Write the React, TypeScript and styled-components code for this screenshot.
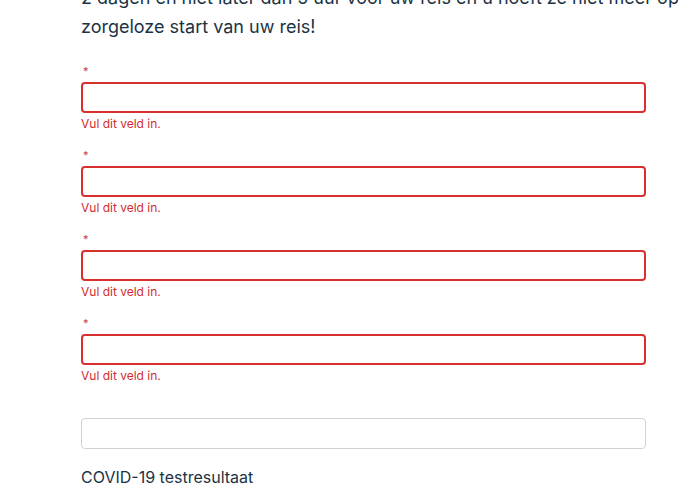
import styled, { createGlobalStyle } from 'styled-components';

const fields = [1, 2, 3, 4];

function App() {
  return (
    <>
      <GlobalStyle />
      <Page>
        <Intro>
          2 dagen en niet later dan 5 uur voor uw reis en u hoeft ze niet meer op
          zorgeloze start van uw reis!
        </Intro>
        <Form>
          {fields.map((id) => (
            <Field key={id}>
              <Required>*</Required>
              <Input type="text" $invalid aria-invalid />
              <Error>Vul dit veld in.</Error>
            </Field>
          ))}
          <PlainField>
            <Input type="text" />
          </PlainField>
          <SectionTitle>COVID-19 testresultaat</SectionTitle>
        </Form>
      </Page>
    </>
  );
}

export default App;

const GlobalStyle = createGlobalStyle`
  body {
    margin: 0;
    background: #ffffff;
    font-family: Inter, "Liberation Sans", Arial, sans-serif;
    color: #1a3344;
    overflow: hidden;
  }
`;

const Page = styled.div`
  width: 681px;
  height: 491px;
  overflow: hidden;
  padding-left: 81px;
  box-sizing: border-box;
`;

const Intro = styled.p`
  width: 640px;
  margin: -17px 0 0;
  font-size: 18px;
  line-height: 29px;
  color: #1a3344;
`;

const Form = styled.div`
  display: flex;
  flex-direction: column;
  width: 565px;
  margin-top: 21px;
`;

const Field = styled.div`
  display: flex;
  flex-direction: column;
  margin-bottom: 14px;
`;

const Required = styled.span`
  font-size: 11px;
  line-height: 18px;
  color: #d9363a;
  margin-bottom: 2px;
  padding-left: 2px;
`;

const Input = styled.input<{ $invalid?: boolean }>`
  box-sizing: border-box;
  width: 100%;
  height: 31px;
  margin: 0;
  padding: 4px 8px;
  border: ${({ $invalid }) => ($invalid ? '2px solid #d8302f' : '1px solid #cfd3d6')};
  border-radius: 4px;
  background: #ffffff;
  font: inherit;
  outline: none;
`;

const Error = styled.span`
  margin-top: 3px;
  font-size: 12px;
  line-height: 16px;
  color: #d12b30;
`;

const PlainField = styled.div`
  margin-top: 20px;
`;

const SectionTitle = styled.h3`
  margin: 16px 0 0;
  font-size: 16px;
  font-weight: 400;
  line-height: 24px;
  color: #1a3344;
`;
